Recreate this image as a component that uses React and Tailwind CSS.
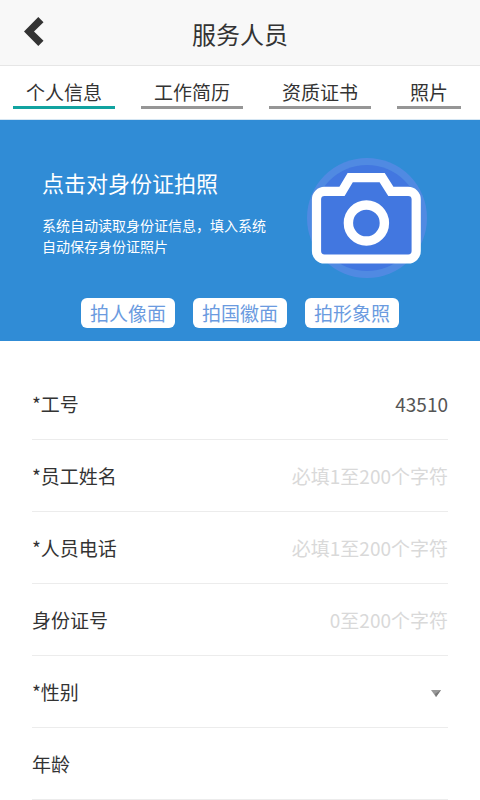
import { useState } from 'react'

const TABS = ['个人信息', '工作简历', '资质证书', '照片']

const SHOTS = ['拍人像面', '拍国徽面', '拍形象照']

const FIELDS = [
  { id: 'number', label: '*工号', initial: '43510' },
  { id: 'name', label: '*员工姓名', placeholder: '必填1至200个字符' },
  { id: 'phone', label: '*人员电话', placeholder: '必填1至200个字符' },
  { id: 'idcard', label: '身份证号', placeholder: '0至200个字符' },
  { id: 'gender', label: '*性别', options: ['男', '女'] },
  { id: 'age', label: '年龄' },
]

function CameraIcon() {
  return (
    <svg viewBox="0 0 120 120" className="w-[120px] h-[120px] shrink-0" fill="none">
      <circle cx="60" cy="60" r="60" fill="#508ae2" />
      <circle cx="60" cy="60" r="53" fill="#4277e0" />
      <path
        d="M17.5 33.3H35L43.2 19.7H75.2L83.8 33.3H101.2A8 8 0 0 1 109.2 41.3V93A8 8 0 0 1 101.2 101H17.5A8 8 0 0 1 9.5 93V41.3A8 8 0 0 1 17.5 33.3Z"
        fill="#4277e0"
        stroke="#fff"
        strokeWidth="9.2"
      />
      <circle cx="59.4" cy="65" r="18" stroke="#fff" strokeWidth="9.4" />
    </svg>
  )
}

function Field({ field, value, onChange }) {
  return (
    <div className="flex items-center h-[72px] border-b border-[#ececec]">
      <label htmlFor={field.id} className="shrink-0 pt-[2px] text-[#333]">{field.label}</label>
      {field.options ? (
        <div className="relative flex-1 min-w-0">
          <select
            id={field.id}
            className="w-full h-10 pr-6 appearance-none bg-transparent text-right text-[#555] outline-none"
            value={value}
            onChange={e => onChange(e.target.value)}
          >
            <option value=""></option>
            {field.options.map(o => <option key={o} value={o}>{o}</option>)}
          </select>
          <svg viewBox="0 0 10 7" className="absolute right-[7px] top-[18px] w-[10px] h-[7px] pointer-events-none">
            <path d="M0 0H10L5 7Z" fill="#999" />
            <path d="M10 0L5 7L4 4Z" fill="#777" />
          </svg>
        </div>
      ) : (
        <input
          id={field.id}
          type="text"
          className="flex-1 min-w-0 h-10 bg-transparent text-right text-[#555] placeholder:text-[#d9d9d9] outline-none"
          placeholder={field.placeholder}
          value={value}
          onChange={e => onChange(e.target.value)}
        />
      )}
    </div>
  )
}

export default function App() {
  const [tab, setTab] = useState(0)
  const [values, setValues] = useState(() => Object.fromEntries(FIELDS.map(f => [f.id, f.initial || ''])))

  return (
    <div className="min-h-screen bg-white text-[#333] font-['Noto_Sans_CJK_SC',sans-serif]">
      {/* Header */}
      <header className="grid grid-cols-[1fr_auto_1fr] items-center h-[66px] bg-[#f8f8f8] border-b border-[#e6e6e6]">
        <button type="button" aria-label="返回" className="justify-self-start ml-6 mb-[3px]">
          <svg viewBox="0 0 20 29" className="block w-[20px] h-[29px]">
            <path d="M0 14.5L14.3 0L19.5 5.2L10 14.5L19.5 23.8L14.3 29Z" fill="#333" />
          </svg>
        </button>
        <h1 className="pt-[2px] text-[24px] leading-[30px]">服务人员</h1>
      </header>

      {/* Tabs */}
      <nav className="flex items-start gap-[26px] h-[54px] px-[13px] pt-[13px] border-b border-[#d5e6f3]">
        {TABS.map((name, i) => (
          <button
            key={name}
            type="button"
            onClick={() => setTab(i)}
            className={`shrink-0 px-[13px] pb-px text-[19px] leading-[26px] border-b-3 ${i === tab ? 'border-[#11a3a0]' : 'border-[#969696]'}`}
          >
            {name}
          </button>
        ))}
      </nav>

      {/* ID card photo banner */}
      <section className="bg-[#308cd6] pt-[38px] pb-[13px]">
        <div className="flex justify-between pl-[42px] pr-[53px]">
          <div className="pt-[9px] text-white">
            <h2 className="text-[22px] leading-[30px]">点击对身份证拍照</h2>
            <p className="mt-[18px] text-[14px] leading-[21px]">
              系统自动读取身份证信息，填入系统
              <br />
              自动保存身份证照片
            </p>
          </div>
          <CameraIcon />
        </div>
        <div className="flex justify-center gap-[18px] mt-5">
          {SHOTS.map(name => (
            <button
              key={name}
              type="button"
              className="h-[30px] px-[9px] rounded-md bg-white text-[19px] leading-[30px] text-[#6b9be0]"
            >
              {name}
            </button>
          ))}
        </div>
      </section>

      {/* Form */}
      <form className="px-8 pt-[27px] text-[19px]">
        {FIELDS.map(f => (
          <Field
            key={f.id}
            field={f}
            value={values[f.id]}
            onChange={v => setValues({ ...values, [f.id]: v })}
          />
        ))}
      </form>
    </div>
  )
}
